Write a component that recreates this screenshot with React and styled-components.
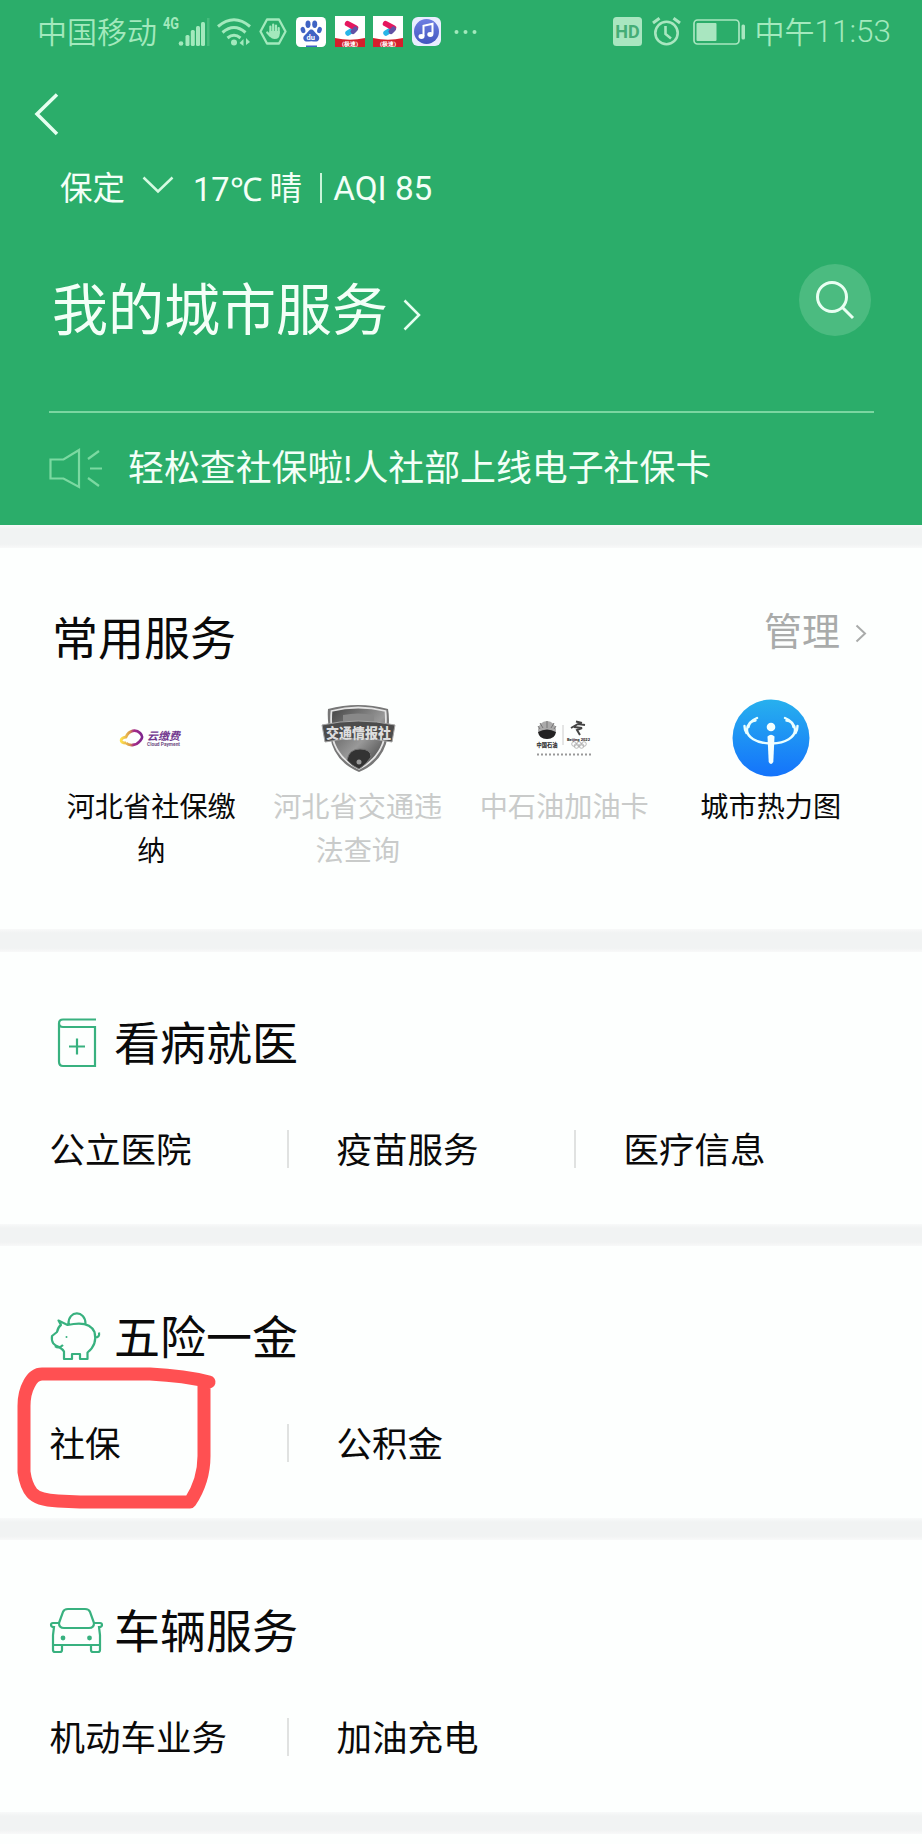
import React from "react";
import styled, { createGlobalStyle } from "styled-components";

const GlobalStyle = createGlobalStyle`
  * { box-sizing: border-box; }
  body {
    margin: 0;
    background: #fdfffe;
    font-family: "Noto Sans CJK SC", "Noto Sans", sans-serif;
    color: #0a0a0a;
  }
  svg { display: block; flex: none; }
`;

const Page = styled.div`
  position: relative;
  width: 922px;
  height: 1844px;
  overflow: hidden;
  background: #fdfffe;
`;

/* ---------- 상단 초록 영역 ---------- */
const Header = styled.header`
  height: 525px;
  background: #2bad6a;
  color: #f3fff7;
`;

const StatusBar = styled.div`
  display: flex;
  justify-content: space-between;
  align-items: center;
  height: 63px;
  padding: 0 31px 0 37px;
  color: #a3e9bd;
`;

const StatusGroup = styled.div`
  display: flex;
  align-items: center;
`;

const StatusText = styled.span`
  padding-bottom: ${(props) => (props.$latin ? 0 : 3)}px;
  font-family: ${(props) => (props.$latin ? "Roboto" : '"Noto Sans CJK SC"')}, sans-serif;
  font-size: ${(props) => props.$size || 30}px;
  font-weight: ${(props) => (props.$latin ? 300 : 350)};
  line-height: 40px;
  white-space: nowrap;
`;

const StatusCell = styled.span`
  display: flex;
  justify-content: center;
  width: ${(props) => props.$w || 38.5}px;
  margin-left: ${(props) => props.$ml || 0}px;
`;

const BackRow = styled.div`
  height: 99px;
  padding: 29px 0 0 32px;
`;

const WeatherRow = styled.div`
  display: flex;
  align-items: center;
  height: 52px;
  padding-left: 60px;
`;

const City = styled.span`
  padding-bottom: 4px;
  font-size: 32.5px;
  line-height: 48px;
`;

const DownArrow = styled.svg`
  margin: 0 19px 6px 17px;
`;

const Latin = styled.span`
  font-family: Roboto, sans-serif;
  font-size: ${(props) => props.$size}px;
`;

const Bar = styled.i`
  width: 2px;
  height: 30px;
  margin: 0 11px 0 18px;
  background: #c9f5d8;
`;

const TitleRow = styled.div`
  display: flex;
  justify-content: space-between;
  height: 197px;
  padding: 50px 51px 0 52px;
`;

const MainTitle = styled.h1`
  display: flex;
  align-items: center;
  gap: 15px;
  height: 83px;
  margin: 0;
  font-size: 56px;
  font-weight: 400;
  line-height: 83px;

  svg { margin-top: 18px; }
`;

const SearchButton = styled.button`
  display: flex;
  align-items: center;
  justify-content: center;
  width: 72px;
  height: 72px;
  padding: 0;
  border: 0;
  border-radius: 50%;
  background: #4bbb80;
`;

const Notice = styled.div`
  display: flex;
  align-items: center;
  height: 114px;
  margin: 0 48px 0 49px;
  border-top: 2px solid #7bd6a1;
  gap: 24px;
`;

const NoticeText = styled.span`
  padding-bottom: 3px;
  font-size: 35.9px;
  line-height: 50px;
  white-space: nowrap;
`;

/* ---------- 공통 섹션 ---------- */
const Gap = styled.div`
  height: ${(props) => props.$h || 22}px;
  background: linear-gradient(#f8f9f9, #f1f3f3 4px, #f1f3f3 calc(100% - 4px), #f8f9f9);
`;

const Common = styled.section`
  height: 381px;
  padding: 54px 48px 0;
`;

const CommonHead = styled.div`
  display: flex;
  justify-content: space-between;
  height: 97px;
  padding: 0 7px 0 4px;
`;

const SectionTitle = styled.h2`
  margin: 0;
  font-size: 46px;
  font-weight: 400;
  line-height: 66px;
`;

const Manage = styled.span`
  display: flex;
  align-items: center;
  gap: 15px;
  height: 50px;
  margin-top: 2px;
  font-size: 38px;
  line-height: 50px;
  color: #a9abaa;

  svg { margin-top: 8px; }
`;

const ServiceGrid = styled.div`
  display: grid;
  grid-template-columns: repeat(4, 206.5px);
`;

const Service = styled.div`
  display: flex;
  flex-direction: column;
  align-items: center;
  color: ${(props) => (props.$off ? "#c9cbca" : "#0a0a0a")};
`;

const ServiceLabel = styled.div`
  width: 174px;
  margin-top: 6px;
  font-size: 28.2px;
  line-height: 43.5px;
  text-align: center;
`;

const Category = styled.section`
  height: 272px;
  padding: 51px 48px 0;
`;

const CategoryHead = styled.div`
  display: flex;
  align-items: center;
  gap: 10px;
  height: 80px;

  svg { margin-top: 3px; }
  h2 { padding-bottom: 7px; }
`;

const Links = styled.div`
  display: flex;
  margin-top: 47px;
`;

const Link = styled.div`
  width: ${(props) => (props.$first ? 239 : 287)}px;
  height: 38px;
  padding-left: ${(props) => (props.$first ? 1.5 : 47.5)}px;
  border-left: ${(props) => (props.$first ? 0 : 2)}px solid #e0e2e1;
  font-size: 35.5px;
  line-height: 36px;
  white-space: nowrap;
`;

// 손으로 그린 빨간 표시는 내용 위에 겹쳐짐
const Mark = styled.svg`
  position: absolute;
  left: 0;
  top: 1350px;
  pointer-events: none;
`;

/* ---------- 아이콘 ---------- */
function Signal() {
  return (
    <svg width="53" height="40" viewBox="0 0 53 40" fill="#a3e9bd">
      <text x="6" y="17" fontFamily="Roboto" fontSize="17" fontWeight="700" textLength="16" lengthAdjust="spacingAndGlyphs">4G</text>
      <circle cx="24" cy="31.5" r="2.3" />
      <rect x="28.5" y="23" width="4" height="11" rx="1.5" />
      <rect x="33.8" y="18" width="4" height="16" rx="1.5" />
      <rect x="39" y="14" width="4" height="20" rx="1.5" />
      <rect x="44" y="10" width="4" height="24" rx="1.5" />
      <rect x="50" y="6" width="2.5" height="28" fill="#45bb7c" />
    </svg>
  );
}

function Wifi() {
  return (
    <svg width="36" height="30" viewBox="0 0 36 30" fill="none" stroke="#a3e9bd" strokeWidth="3">
      <path d="M2 9.5Q18 -4 34 9.5" />
      <path d="M6.5 15.5Q18 5.5 29.5 15.5" />
      <path d="M11.5 21Q18 15.5 24.5 21" />
      <circle cx="18" cy="25.5" r="3" fill="#a3e9bd" stroke="none" />
      <path d="M27.5 22v7l-4-3zM30 21v7l4-3z" fill="#a3e9bd" stroke="none" />
    </svg>
  );
}

function HandHex() {
  return (
    <svg width="28" height="27" viewBox="0 0 28 27" fill="none" stroke="#a3e9bd" strokeWidth="2.3" strokeLinejoin="round">
      <path d="M8 1.5h12l6.5 12-6.5 12H8l-6.5-12z" />
      <path d="M8.2 14.5l3.2 3.5V8.5M14.2 14V6.5M17 14V7.5M19.7 15V10" strokeWidth="2.2" strokeLinecap="round" />
      <path d="M10.5 13h10.2v3q0 5-5 5-3.5 0-5-3.2z" fill="#a3e9bd" stroke="none" />
    </svg>
  );
}

function Paw() {
  return (
    <svg width="30" height="30" viewBox="0 0 30 30">
      <rect width="30" height="30" rx="4.5" fill="#fff" />
      <g fill="#3f63c4">
        <ellipse cx="12" cy="7.3" rx="2.5" ry="3.7" />
        <ellipse cx="18.7" cy="7.3" rx="2.5" ry="3.7" />
        <ellipse cx="7" cy="13" rx="2.3" ry="3.2" transform="rotate(-15 7 13)" />
        <ellipse cx="23.5" cy="13" rx="2.3" ry="3.2" transform="rotate(15 23.5 13)" />
        <path d="M15.3 12.5c2.5 0 3 2.5 5 4.3 2.5 2 3.7 3.5 2.7 5.7-1.5 3.2-4.5 1.8-7.7 1.8s-6.2 1.4-7.7-1.8c-1-2.2.2-3.7 2.7-5.7 2-1.8 2.5-4.3 5-4.3z" />
        <rect x="10" y="28.5" width="11" height="1.5" />
      </g>
      <text x="10.5" y="22.5" fontSize="7.5" fontFamily="Roboto" fontWeight="700" fill="#fff">du</text>
    </svg>
  );
}

function Video() {
  return (
    <svg width="30" height="31" viewBox="0 0 30 31">
      <rect width="30" height="31" fill="#fff" />
      <path d="M13 17L19.5 13" stroke="#28b6e8" strokeWidth="5.5" strokeLinecap="round" />
      <path d="M12.5 7.7L20.5 12" stroke="#e5175e" strokeWidth="5.5" strokeLinecap="round" />
      <path d="M18 15.5L20.5 13" stroke="#6252a5" strokeWidth="5" strokeLinecap="round" />
      <path d="M0 22q15 3.5 30 0v9H0z" fill="#d51e2c" />
      <text x="15" y="29.5" textAnchor="middle" fontSize="6" fontFamily="Roboto" fontWeight="700" fill="#fff">(极速)</text>
    </svg>
  );
}

function Music() {
  return (
    <svg width="29" height="29" viewBox="0 0 29 29">
      <defs>
        <linearGradient id="music" x1="0" y1="0" x2="0" y2="1">
          <stop offset="0" stopColor="#6f7fe2" />
          <stop offset="1" stopColor="#4156bf" />
        </linearGradient>
      </defs>
      <rect width="29" height="29" rx="6" fill="#e9edff" />
      <circle cx="14.5" cy="14.5" r="12.5" fill="url(#music)" />
      <path d="M11.5 19V8.8l9-2v10" fill="none" stroke="#fff" strokeWidth="2" />
      <ellipse cx="9.5" cy="19.5" rx="3" ry="2.4" fill="#fff" />
      <ellipse cx="18.3" cy="17.5" rx="3" ry="2.4" fill="#fff" />
    </svg>
  );
}

function Dots() {
  return (
    <svg width="24" height="6" viewBox="0 0 24 6" fill="#a3e9bd">
      <circle cx="3.5" cy="3" r="2" />
      <circle cx="12.5" cy="3" r="2" />
      <circle cx="21.5" cy="3" r="2" />
    </svg>
  );
}

function HdBadge() {
  return (
    <svg width="29" height="29" viewBox="0 0 29 29">
      <rect width="29" height="29" rx="3.5" fill="#a9e6c0" />
      <text x="14.5" y="20.8" textAnchor="middle" fontFamily="Roboto" fontSize="18" fontWeight="700" fill="#45ad76">HD</text>
    </svg>
  );
}

function Alarm() {
  return (
    <svg width="29" height="29" viewBox="0 0 29 29" fill="none" stroke="#a9e6c0" strokeWidth="2.6">
      <circle cx="14.5" cy="16" r="11.2" />
      <path d="M1 6l6.5-4.8M28 6l-6.5-4.8" strokeWidth="3" />
      <path d="M13.5 9v8l5.5 4.5" />
    </svg>
  );
}

function Battery() {
  return (
    <svg width="53" height="26" viewBox="0 0 53 26">
      <rect x="1" y="1" width="45" height="24" rx="3.5" fill="none" stroke="#a9e6c0" strokeWidth="1.7" />
      <rect x="3.5" y="4" width="20" height="18" rx="1" fill="#a9e6c0" />
      <rect x="48.5" y="5.5" width="3.5" height="15" rx="1.5" fill="#a9e6c0" />
    </svg>
  );
}

function Chevron({ w, h, color, stroke }) {
  return (
    <svg width={w} height={h} viewBox={`0 0 ${w} ${h}`} fill="none" stroke={color} strokeWidth={stroke}>
      <path d={`M1.5 1.5L${w - 2} ${h / 2}L1.5 ${h - 1.5}`} />
    </svg>
  );
}

function Speaker() {
  return (
    <svg width="55" height="42" viewBox="0 0 55 42" fill="none" stroke="#7bd9a1" strokeWidth="2.2">
      <path d="M1.5 11.5h13L30 2v37L14.5 30.5h-13z" />
      <path d="M39 11L50 3M41 20.5h12M39 30L50 38" />
    </svg>
  );
}

function CloudPay() {
  return (
    <svg width="78" height="78" viewBox="0 0 78 78">
      <defs>
        <linearGradient id="pay">
          <stop offset="0" stopColor="#ffe14d" />
          <stop offset=".4" stopColor="#d99b4a" />
          <stop offset=".6" stopColor="#a82c86" />
          <stop offset="1" stopColor="#7d258e" />
        </linearGradient>
      </defs>
      <path d="M14 44c-7 0-6-5 0-6 3-7 10-8 14-4 3 3 3 5 0 8-4 5-11 5-14 2" fill="none" stroke="url(#pay)" strokeWidth="2.8" />
      <text x="35" y="41" fontSize="11" fontWeight="700" fontStyle="italic" fill="#71368e" textLength="33" lengthAdjust="spacingAndGlyphs">云缴费</text>
      <text x="35" y="47" fontSize="5" fontFamily="Roboto" fontWeight="700" fill="#704f83" textLength="33" lengthAdjust="spacingAndGlyphs">Cloud Payment</text>
    </svg>
  );
}

function Shield() {
  return (
    <svg width="78" height="78" viewBox="0 0 78 78">
      <defs>
        <linearGradient id="shd" x1="0" y1="0" x2="1" y2="1">
          <stop offset="0" stopColor="#444" />
          <stop offset=".55" stopColor="#999" />
          <stop offset="1" stopColor="#333" />
        </linearGradient>
      </defs>
      <path d="M9 10Q24 6 39 6t30 4q2 10 0 26-4 27-29 37-26-11-29-37-3-16-2-26z" fill="#777" />
      <path d="M12.5 12Q39 5 66.5 12q1 11-.5 24-4 23-26 34Q17 59 13 36q-1.5-14-.5-24z" fill="url(#shd)" stroke="#e4e4e4" strokeWidth="1.8" />
      <path d="M28 61q2-11 13-11t11 8q-4 7-12 12-7-3-12-9z" fill="#333" stroke="#777" />
      <circle cx="40" cy="63" r="2.5" fill="#999" />
      <path d="M24 16q15-3 31 0v6H24z" fill="#888" />
      <path d="M3 26q36-8 73 0l-3 17q-33-7-67 0z" fill="#4c4c4c" stroke="#a5a5a5" strokeWidth="1" />
      <text x="7" y="38.5" fontSize="14" fontWeight="900" fill="#ddd" textLength="65" lengthAdjust="spacingAndGlyphs">交通情报社</text>
    </svg>
  );
}

function Petro() {
  return (
    <svg width="78" height="78" viewBox="0 0 78 78">
      <circle cx="22" cy="31" r="9" fill="#aaa" />
      <path d="M13 33q9-5 18 0-1 7-9 7t-9-7z" fill="#222" />
      <path d="M22 29v-7M18 29l-3-5M26 29l3-5M15 30l-2-3M29 30l2-3" stroke="#777" strokeWidth="1" />
      <text x="11.5" y="47.5" fontSize="6" fontWeight="900" fill="#333" textLength="21" lengthAdjust="spacingAndGlyphs">中国石油</text>
      <path d="M38 26v20" stroke="#ccc" />
      <path d="M51 22.5l6 1.5M46 29l7-4 7 1M49 28l8 1-5 2 3 5" fill="none" stroke="#444" strokeWidth="2" />
      <text x="42" y="41.5" fontSize="4" fontFamily="Roboto" fontWeight="900" fill="#333" textLength="23">Beijing 2022</text>
      <g fill="none" stroke="#aaa" strokeWidth=".8">
        <circle cx="49" cy="45" r="2.3" />
        <circle cx="54" cy="45" r="2.3" />
        <circle cx="59" cy="45" r="2.3" />
        <circle cx="51.5" cy="47" r="2.3" />
        <circle cx="56.5" cy="47" r="2.3" />
      </g>
      <path d="M12 55.5h54" stroke="#999" strokeWidth="2" strokeDasharray="2 2" />
    </svg>
  );
}

function HeatMap() {
  return (
    <svg width="78" height="78" viewBox="0 0 78 78">
      <defs>
        <linearGradient id="heat" x1="0" y1="0" x2="0" y2="1">
          <stop offset="0" stopColor="#27b0ee" />
          <stop offset="1" stopColor="#1473fb" />
        </linearGradient>
      </defs>
      <circle cx="39" cy="39" r="38.5" fill="url(#heat)" />
      <g fill="none" stroke="#eaffff" strokeWidth="2.4" strokeLinecap="round">
        <path d="M38 44.5C24 44 15 38 15 31q0-8 10-12M14.5 34q-2-3-2-7M16.500 28q1-6 7-6.5" />
        <path d="M40 44.5C54 44 63 38 63 31q0-8-10-12M63.5 34q2-3 2-7M61.5 28q-1-6-7-6.5" />
      </g>
      <circle cx="39" cy="28" r="4.3" fill="#f4ffff" />
      <path d="M35.5 37.5q3.5-3.5 7 0l-1.2 25.5q-2.3 4-4.600 0z" fill="#f4ffff" />
    </svg>
  );
}

const lineIcon = { width: 56, height: 56, viewBox: "0 0 56 56", fill: "none", stroke: "#38b17f", strokeWidth: 2.2 };

function Book() {
  return (
    <svg {...lineIcon}>
      <path d="M48 2.5H15q-4 0-4 4v38q0 4.5 4 4.5h32V10H15q-4 0-4-4M29 21.5v16M21 29.5h16" />
    </svg>
  );
}

function Pig() {
  return (
    <svg {...lineIcon}>
      <path d="M20.5 13C20-1 37.5-1 37.5 12.5M19.5 14q22-5 27 7c2 8 0 15-7 20.5v6.5h-7.5v-5h-8v5h-8v-7.5q-1-2-5-4.5c-5-2-8-4-7-11l5-4q1-5 4-7l-2.500-4.500 9 4.500zM47 26.5q5 0 4-5" strokeLinejoin="round" />
      <path d="M7 35q4 3 8-1" />
      <circle cx="18.5" cy="26" r="1" fill="#38b17f" stroke="none" />
    </svg>
  );
}

function Car() {
  return (
    <svg {...lineIcon}>
      <path d="M11 18l4-11q1-3 5-3h17q4 0 5 3l4 11q0 5-5 5H16q-5 0-5-5z" />
      <path d="M10 18H5q-2 0-2 2t3 2l-1 8v15q0 2 2 2h5q2 0 2-2v-5M47 18h5q2 0 2 2t-3 2l1 8v15q0 2-2 2h-5q-2 0-2-2v-5M5 40h47" />
      <circle cx="15" cy="33" r="2.4" fill="#38b17f" stroke="none" />
      <circle cx="41.5" cy="33" r="2.4" fill="#38b17f" stroke="none" />
    </svg>
  );
}

const services = [
  { name: "河北省社保缴纳", icon: <CloudPay /> },
  { name: "河北省交通违法查询", icon: <Shield />, off: true },
  { name: "中石油加油卡", icon: <Petro />, off: true },
  { name: "城市热力图", icon: <HeatMap /> },
];

const categories = [
  { title: "看病就医", icon: <Book />, links: ["公立医院", "疫苗服务", "医疗信息"], gap: 23 },
  { title: "五险一金", icon: <Pig />, links: ["社保", "公积金"], gap: 22 },
  { title: "车辆服务", icon: <Car />, links: ["机动车业务", "加油充电"], gap: 22 },
];

function App() {
  return (
    <Page>
      <GlobalStyle />
      <Header>
        <StatusBar>
          <StatusGroup>
            <StatusText>中国移动</StatusText>
            <Signal />
            <StatusCell $ml={5}><Wifi /></StatusCell>
            <StatusCell><HandHex /></StatusCell>
            <StatusCell><Paw /></StatusCell>
            <StatusCell><Video /></StatusCell>
            <StatusCell><Video /></StatusCell>
            <StatusCell><Music /></StatusCell>
            <StatusCell><Dots /></StatusCell>
          </StatusGroup>
          <StatusGroup>
            <StatusCell><HdBadge /></StatusCell>
            <StatusCell><Alarm /></StatusCell>
            <StatusCell $w={69}><Battery /></StatusCell>
            <StatusText>中午</StatusText>
            <StatusText $latin $size={31.5}>11:53</StatusText>
          </StatusGroup>
        </StatusBar>

        <BackRow>
          <svg width="28" height="44" viewBox="0 0 28 44" fill="none" stroke="#e6fff0" strokeWidth="3.5">
            <path d="M25 2.5L5 22l20 20" />
          </svg>
        </BackRow>

        <WeatherRow>
          <City>保定</City>
          <DownArrow width="32" height="18" viewBox="0 0 32 18" fill="none" stroke="#d5fbe2" strokeWidth="2.5">
            <path d="M1.5 1.5L16 15.5l14.5-14" />
          </DownArrow>
          <Latin $size={32.5}>17℃&nbsp;</Latin>
          <City>晴</City>
          <Bar />
          <Latin $size={33.3}>AQI 85</Latin>
        </WeatherRow>

        <TitleRow>
          <MainTitle>
            我的城市服务
            <Chevron w={18} h={32} color="#e6fff0" stroke={2.5} />
          </MainTitle>
          <SearchButton aria-label="搜索">
            <svg width="40" height="40" viewBox="0 0 40 40" fill="none" stroke="#e9fff2" strokeWidth="3">
              <circle cx="17" cy="17" r="14.5" />
              <path d="M27 27l11 11" />
            </svg>
          </SearchButton>
        </TitleRow>

        <Notice>
          <Speaker />
          <NoticeText>轻松查社保啦<Latin $size={35}>!</Latin>人社部上线电子社保卡</NoticeText>
        </Notice>
      </Header>

      <Gap $h={23} />

      <Common>
        <CommonHead>
          <SectionTitle>常用服务</SectionTitle>
          <Manage>
            管理
            <Chevron w={12} h={19} color="#a9abaa" stroke={2} />
          </Manage>
        </CommonHead>
        <ServiceGrid>
          {services.map((item) => (
            <Service key={item.name} $off={item.off}>
              {item.icon}
              <ServiceLabel>{item.name}</ServiceLabel>
            </Service>
          ))}
        </ServiceGrid>
      </Common>

      {categories.map((item) => (
        <React.Fragment key={item.title}>
          <Gap $h={item.gap} />
          <Category>
            <CategoryHead>
              {item.icon}
              <SectionTitle>{item.title}</SectionTitle>
            </CategoryHead>
            <Links>
              {item.links.map((text, i) => (
                <Link key={text} $first={i === 0}>{text}</Link>
              ))}
            </Links>
          </Category>
        </React.Fragment>
      ))}
      <Gap />

      <Mark width="230" height="170" viewBox="0 0 230 170" fill="none" stroke="#ff5052" strokeWidth="13" strokeLinecap="round" strokeLinejoin="round">
        <path d="M209 32C190 27 170 25 150 24H42Q34 24 29 34Q24 43 24 56V122Q26 136 32 143Q38 150 58 151L80 152H190Q204 131 204 106V32" />
      </Mark>
    </Page>
  );
}

export default App;
